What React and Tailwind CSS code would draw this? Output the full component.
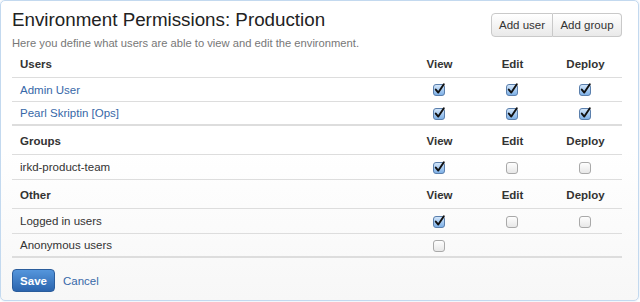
import React from "react";

function CheckBox({ checked }) {
  if (checked) {
    return (
      <svg width="13" height="13" viewBox="0 0 13 13" className="block">
        <defs>
          <linearGradient id="cbOn" x1="0" y1="0" x2="0" y2="1">
            <stop offset="0" stopColor="#d6e8fb" />
            <stop offset="1" stopColor="#7aaee6" />
          </linearGradient>
        </defs>
        <rect x="0.5" y="1.5" width="11" height="11" rx="2.5" fill="url(#cbOn)" stroke="#5b7fac" />
        <path d="M2.8 6.6 L5.3 9.6 L10.8 1.2" fill="none" stroke="#111" strokeWidth="1.9" strokeLinecap="round" strokeLinejoin="round" />
      </svg>
    );
  }
  return (
    <svg width="13" height="13" viewBox="0 0 13 13" className="block">
      <defs>
        <linearGradient id="cbOff" x1="0" y1="0" x2="0" y2="1">
          <stop offset="0" stopColor="#ffffff" />
          <stop offset="1" stopColor="#e6e6e6" />
        </linearGradient>
      </defs>
      <rect x="0.5" y="1.5" width="11" height="11" rx="2.5" fill="url(#cbOff)" stroke="#a9a9a9" />
    </svg>
  );
}

function HeaderRow({ label, h }) {
  return (
    <div className={`flex items-end pb-[6px] border-b border-[#dddddd] font-bold ${h}`}>
      <div className="flex-1 pl-2">{label}</div>
      <div className="w-[73px] text-center">View</div>
      <div className="w-[73px] text-center">Edit</div>
      <div className="w-[73px] text-center">Deploy</div>
    </div>
  );
}

function PermRow({ name, link, perms, h, thick }) {
  return (
    <div className={`flex items-center ${h} ${thick ? "border-b-2" : "border-b"} border-[#dddddd]`}>
      <div className={`flex-1 pl-2 ${link ? "text-[#3768a8]" : ""}`}>{name}</div>
      {perms.map((p, i) => (
        <div key={i} className="w-[73px] flex justify-center">
          {p === null ? null : <CheckBox checked={p} />}
        </div>
      ))}
    </div>
  );
}

export default function App() {
  return (
    <div className="w-[640px] h-[302px] bg-white text-[#333] text-[11.5px] leading-[14px]" style={{ fontFamily: '"Liberation Sans", Arial, sans-serif' }}>
      <div className="w-[639px] h-[301px] border border-[#c3d9ef] rounded-[5px] bg-gradient-to-b from-white via-white to-[#f7f7f7] shadow-[0_0_2px_rgba(120,160,210,0.35)]">
        <div className="flex justify-between pl-[11px] pr-[16px] pt-[8px]">
          <div>
            <h1 className="text-[18.8px] leading-[22px] text-[#222]">Environment Permissions: Production</h1>
            <p className="mt-[5px] text-[11.2px] text-[#777] leading-[14px]">Here you define what users are able to view and edit the environment.</p>
          </div>
          <div className="flex mt-[4px] h-[24px]">
            <button className="w-[62px] h-full border border-[#c9c9c9] rounded-l-[4px] bg-gradient-to-b from-white to-[#e9e9e9] text-[#333]">Add user</button>
            <button className="w-[69px] h-full border border-l-0 border-[#c9c9c9] rounded-r-[4px] bg-gradient-to-b from-white to-[#e9e9e9] text-[#333]">Add group</button>
          </div>
        </div>

        <div className="ml-[11px] mr-[16px]">
          <HeaderRow label="Users" h="h-[28px]" />
          <PermRow name="Admin User" link perms={[true, true, true]} h="h-[24px]" />
          <PermRow name="Pearl Skriptin [Ops]" link perms={[true, true, true]} h="h-[24px]" thick />
          <HeaderRow label="Groups" h="h-[29px]" />
          <PermRow name="irkd-product-team" perms={[true, false, false]} h="h-[25px]" />
          <HeaderRow label="Other" h="h-[29px]" />
          <PermRow name="Logged in users" perms={[true, false, false]} h="h-[25px]" />
          <PermRow name="Anonymous users" perms={[false, null, null]} h="h-[24px]" thick />
        </div>

        <div className="flex items-center gap-[8px] ml-[11px] mt-[11px]">
          <button className="h-[23px] w-[43px] rounded-[4px] border border-[#2b5d9c] bg-gradient-to-b from-[#5596dc] to-[#2c65ae] text-white font-bold">Save</button>
          <a className="text-[#3768a8]">Cancel</a>
        </div>
      </div>
    </div>
  );
}
